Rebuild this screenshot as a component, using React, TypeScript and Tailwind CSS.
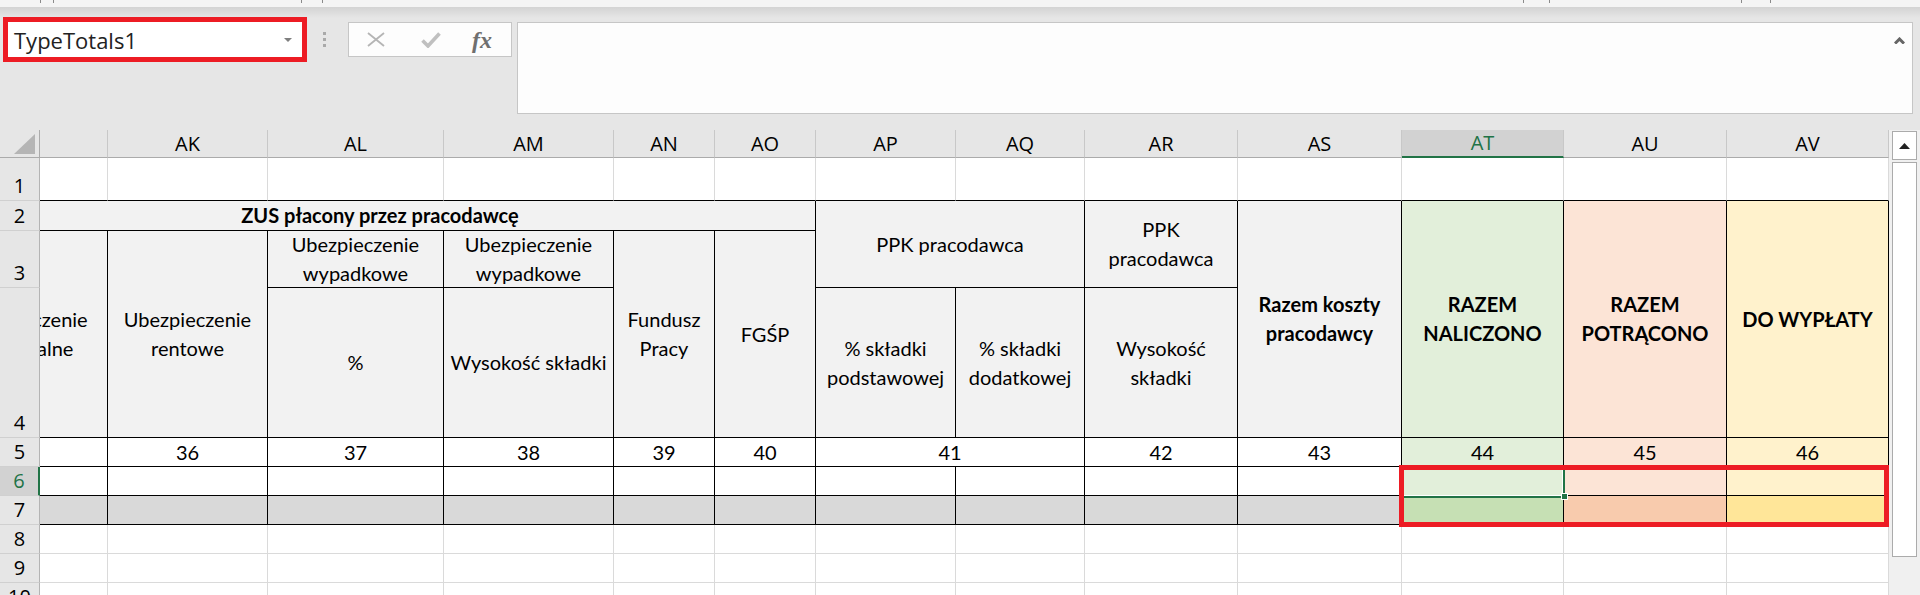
import React from 'react';

// grid placement helpers, written out so tailwind sees every class
const C = ['', 'col-start-1', 'col-start-2', 'col-start-3', 'col-start-4', 'col-start-5', 'col-start-6', 'col-start-7', 'col-start-8', 'col-start-9', 'col-start-10', 'col-start-11', 'col-start-12', 'col-start-13', 'col-start-14', 'col-start-15'];
const R = ['', 'row-start-1', 'row-start-2', 'row-start-3', 'row-start-4', 'row-start-5', 'row-start-6', 'row-start-7', 'row-start-8', 'row-start-9', 'row-start-10', 'row-start-11'];

const HEAD = 'bg-[#f2f2f2]';
const GREEN = 'bg-[#e2efda]';
const PEACH = 'bg-[#fce4d6]';
const YELLOW = 'bg-[#fff2cc]';

const letters: [string, number][] = [
  ['', 2], ['AK', 3], ['AL', 4], ['AM', 5], ['AN', 6], ['AO', 7], ['AP', 8],
  ['AQ', 9], ['AR', 10], ['AS', 11], ['AT', 12], ['AU', 13], ['AV', 14],
];
const dataCols = [2, 3, 4, 5, 6, 7, 8, 9, 10, 11, 12, 13, 14];

function Cell({ at, className = '', end = false, children }: { at: string; className?: string; end?: boolean; children?: React.ReactNode }) {
  return (
    <div className={`${at} flex items-center ${end ? 'justify-end overflow-hidden' : 'justify-center'} text-center whitespace-nowrap border-r border-b border-black leading-[29px] ${className}`}>
      {children}
    </div>
  );
}

function TopStrip() {
  const marks = [40, 12, 247, 20, 1200, 25, 191, 28];
  return (
    <div className="h-[7px] bg-[#f4f4f4] flex items-start">
      {marks.map((m, i) => (
        <span key={i} style={{ marginLeft: m }} className="w-px h-[3px] bg-[#8a8a8a]" />
      ))}
    </div>
  );
}

function FormulaBar() {
  return (
    <div className="h-[123px] flex items-start pt-[10px] bg-[linear-gradient(to_bottom,#d3d3d3,#e6e6e6_11px)]">
      <div className="ml-[3px] w-[304px] h-[45px] border-[5px] border-[#ed1c24] bg-white flex items-center justify-between pl-[6px] pr-[10px]">
        <span className="text-[22px] leading-none text-[#222]">TypeTotals1</span>
        <svg width="8" height="4" viewBox="0 0 8 4">
          <path d="M0 0h8L4 4z" fill="#7f7f7f" />
        </svg>
      </div>
      <div className="ml-[16px] mt-[15px] flex flex-col gap-[3px]">
        <span className="w-[3px] h-[3px] bg-[#a9a9a9]" />
        <span className="w-[3px] h-[3px] bg-[#a9a9a9]" />
        <span className="w-[3px] h-[3px] bg-[#a9a9a9]" />
      </div>
      <div className="ml-[22px] mt-[5px] w-[164px] h-[35px] bg-[#fdfdfd] border border-[#c6c6c6] flex items-center pl-[18px]">
        <svg width="18" height="15" viewBox="0 0 18 15">
          <path d="M1 1L17 14M17 1L1 14" stroke="#b5b5b5" strokeWidth="1.8" />
        </svg>
        <svg className="ml-[36px]" width="20" height="16" viewBox="0 0 20 16">
          <path d="M1.5 8.5L7 14L18.5 1.5" stroke="#c0c0c0" strokeWidth="3.6" fill="none" />
        </svg>
        <span className="ml-[31px] font-['Liberation_Serif',serif] italic font-bold text-[24px] leading-none text-[#6f6f6f]">fx</span>
      </div>
      <div className="ml-[5px] mt-[5px] w-[1396px] h-[92px] bg-[#fdfdfd] border border-[#c6c6c6] flex justify-end items-start pr-[7px] pt-[14px]">
        <svg width="11" height="7" viewBox="0 0 11 7">
          <path d="M1 6.5L5.5 2L10 6.5" stroke="#666" strokeWidth="3" fill="none" />
        </svg>
      </div>
    </div>
  );
}

function Sheet() {
  return (
    <div className="h-[465px] overflow-hidden grid grid-cols-[40px_68px_160px_176px_170px_101px_101px_140px_129px_153px_164px_162px_163px_162px_31px] grid-rows-[28px_43px_30px_57px_150px_29px_29px_29px_29px_29px_29px] font-['Lato',sans-serif] text-[20px] text-black">
      {/* select-all corner */}
      <div className="col-start-1 row-start-1 bg-[#e6e6e6] border-r border-b border-[#ababab] flex items-end justify-end pr-[4px] pb-[3px]">
        <svg width="21" height="20" viewBox="0 0 21 20">
          <path d="M21 0V20H0z" fill="#b5b5b5" />
        </svg>
      </div>

      {/* column letters */}
      {letters.map(([l, c]) => (
        <div
          key={c}
          className={`${C[c]} row-start-1 flex items-center justify-center font-['Open_Sans',sans-serif] text-[20px] border-r border-b border-r-[#c8c8c8] ${l === 'AT' ? 'bg-[#d2d2d2] text-[#217346] border-b-2 border-b-[#217346]' : 'bg-[#e6e6e6] border-b-[#ababab]'}`}
        >
          {l}
        </div>
      ))}

      {/* row numbers */}
      {[1, 2, 3, 4, 5, 6, 7, 8, 9, 10].map((n) => (
        <div
          key={n}
          className={`col-start-1 ${R[n + 1]} flex items-end justify-center pb-[4px] font-['Open_Sans',sans-serif] text-[20px] leading-none border-b border-b-[#d0d0d0] ${n === 6 ? 'bg-[#d2d2d2] text-[#217346] border-r-2 border-r-[#217346]' : 'bg-[#e6e6e6] border-r border-r-[#b4b4b4]'}`}
        >
          {n}
        </div>
      ))}

      {/* row 1 */}
      {dataCols.map((c) => (
        <div key={`r1-${c}`} className={`${C[c]} row-start-2 bg-white border-r border-b border-r-[#dadada] border-b-black`} />
      ))}

      {/* row 2 */}
      <Cell at="col-start-2 col-span-6 row-start-3" className={HEAD} end>
        <div className="w-[870px] shrink-0 text-center font-bold">ZUS płacony przez pracodawcę</div>
      </Cell>
      <Cell at="col-start-8 col-span-2 row-start-3 row-span-2" className={HEAD}>PPK pracodawca</Cell>
      <Cell at="col-start-10 row-start-3 row-span-2" className={HEAD}>PPK<br />pracodawca</Cell>
      <Cell at="col-start-11 row-start-3 row-span-3" className={`${HEAD} font-bold`}>Razem koszty<br />pracodawcy</Cell>
      <Cell at="col-start-12 row-start-3 row-span-3" className={`${GREEN} font-bold`}>RAZEM<br />NALICZONO</Cell>
      <Cell at="col-start-13 row-start-3 row-span-3" className={`${PEACH} font-bold`}>RAZEM<br />POTRĄCONO</Cell>
      <Cell at="col-start-14 row-start-3 row-span-3" className={`${YELLOW} font-bold`}>DO WYPŁATY</Cell>

      {/* row 3 */}
      <Cell at="col-start-2 row-start-4 row-span-2" className={HEAD} end>
        <div className="w-[166px] shrink-0 text-center">Ubezpieczenie<br />emerytalne</div>
      </Cell>
      <Cell at="col-start-3 row-start-4 row-span-2" className={HEAD}>Ubezpieczenie<br />rentowe</Cell>
      <Cell at="col-start-4 row-start-4" className={HEAD}>Ubezpieczenie<br />wypadkowe</Cell>
      <Cell at="col-start-5 row-start-4" className={HEAD}>Ubezpieczenie<br />wypadkowe</Cell>
      <Cell at="col-start-6 row-start-4 row-span-2" className={HEAD}>Fundusz<br />Pracy</Cell>
      <Cell at="col-start-7 row-start-4 row-span-2" className={HEAD}>FGŚP</Cell>

      {/* row 4 */}
      <Cell at="col-start-4 row-start-5" className={HEAD}>%</Cell>
      <Cell at="col-start-5 row-start-5" className={HEAD}>Wysokość składki</Cell>
      <Cell at="col-start-8 row-start-5" className={HEAD}>% składki<br />podstawowej</Cell>
      <Cell at="col-start-9 row-start-5" className={HEAD}>% składki<br />dodatkowej</Cell>
      <Cell at="col-start-10 row-start-5" className={HEAD}>Wysokość<br />składki</Cell>

      {/* row 5 */}
      <Cell at="col-start-2 row-start-6" className="bg-white" />
      <Cell at="col-start-3 row-start-6" className="bg-white">36</Cell>
      <Cell at="col-start-4 row-start-6" className="bg-white">37</Cell>
      <Cell at="col-start-5 row-start-6" className="bg-white">38</Cell>
      <Cell at="col-start-6 row-start-6" className="bg-white">39</Cell>
      <Cell at="col-start-7 row-start-6" className="bg-white">40</Cell>
      <Cell at="col-start-8 col-span-2 row-start-6" className="bg-white">41</Cell>
      <Cell at="col-start-10 row-start-6" className="bg-white">42</Cell>
      <Cell at="col-start-11 row-start-6" className="bg-white">43</Cell>
      <Cell at="col-start-12 row-start-6" className={GREEN}>44</Cell>
      <Cell at="col-start-13 row-start-6" className={PEACH}>45</Cell>
      <Cell at="col-start-14 row-start-6" className={YELLOW}>46</Cell>

      {/* row 6 */}
      {dataCols.map((c) => (
        <Cell
          key={`r6-${c}`}
          at={`${C[c]} row-start-7`}
          className={c === 12 ? GREEN : c === 13 ? PEACH : c === 14 ? YELLOW : 'bg-white'}
        />
      ))}

      {/* row 7 - totals */}
      {dataCols.map((c) => (
        <Cell
          key={`r7-${c}`}
          at={`${C[c]} row-start-8`}
          className={c === 12 ? 'bg-[#c6e0b4]' : c === 13 ? 'bg-[#f8cbad]' : c === 14 ? 'bg-[#ffe699]' : 'bg-[#d9d9d9]'}
        />
      ))}

      {/* rows 8-10 */}
      {[9, 10, 11].map((r) =>
        dataCols.map((c) => (
          <div key={`g-${r}-${c}`} className={`${C[c]} ${R[r]} bg-white border-r border-b border-[#dadada]`} />
        ))
      )}

      {/* vertical scrollbar */}
      <div className="col-start-15 row-start-1 row-span-11 bg-[#f0f0f0] flex flex-col items-center pt-px">
        <div className="w-[25px] h-[29px] bg-white border border-[#ababab] flex items-center justify-center">
          <svg width="11" height="6" viewBox="0 0 11 6">
            <path d="M0 6L5.5 0L11 6z" fill="#222" />
          </svg>
        </div>
        <div className="mt-[2px] w-[25px] h-[395px] bg-white border border-[#ababab]" />
      </div>
    </div>
  );
}

export default function App() {
  return (
    <div className="relative w-[1920px] h-[595px] overflow-hidden bg-[#e6e6e6] font-['Open_Sans',sans-serif] text-black">
      <TopStrip />
      <FormulaBar />
      <Sheet />

      {/* active cell AT6 */}
      <div className="absolute left-[1400px] top-[466px] w-[165px] h-[32px] border-2 border-[#217346] shadow-[inset_0_0_0_1px_white]" />
      <div className="absolute left-[1561px] top-[493px] w-[7px] h-[7px] bg-[#217346] border border-white" />

      {/* red annotation */}
      <div className="absolute left-[1399px] top-[465px] w-[490px] h-[62px] border-[5px] border-[#ed1c24]" />
    </div>
  );
}
